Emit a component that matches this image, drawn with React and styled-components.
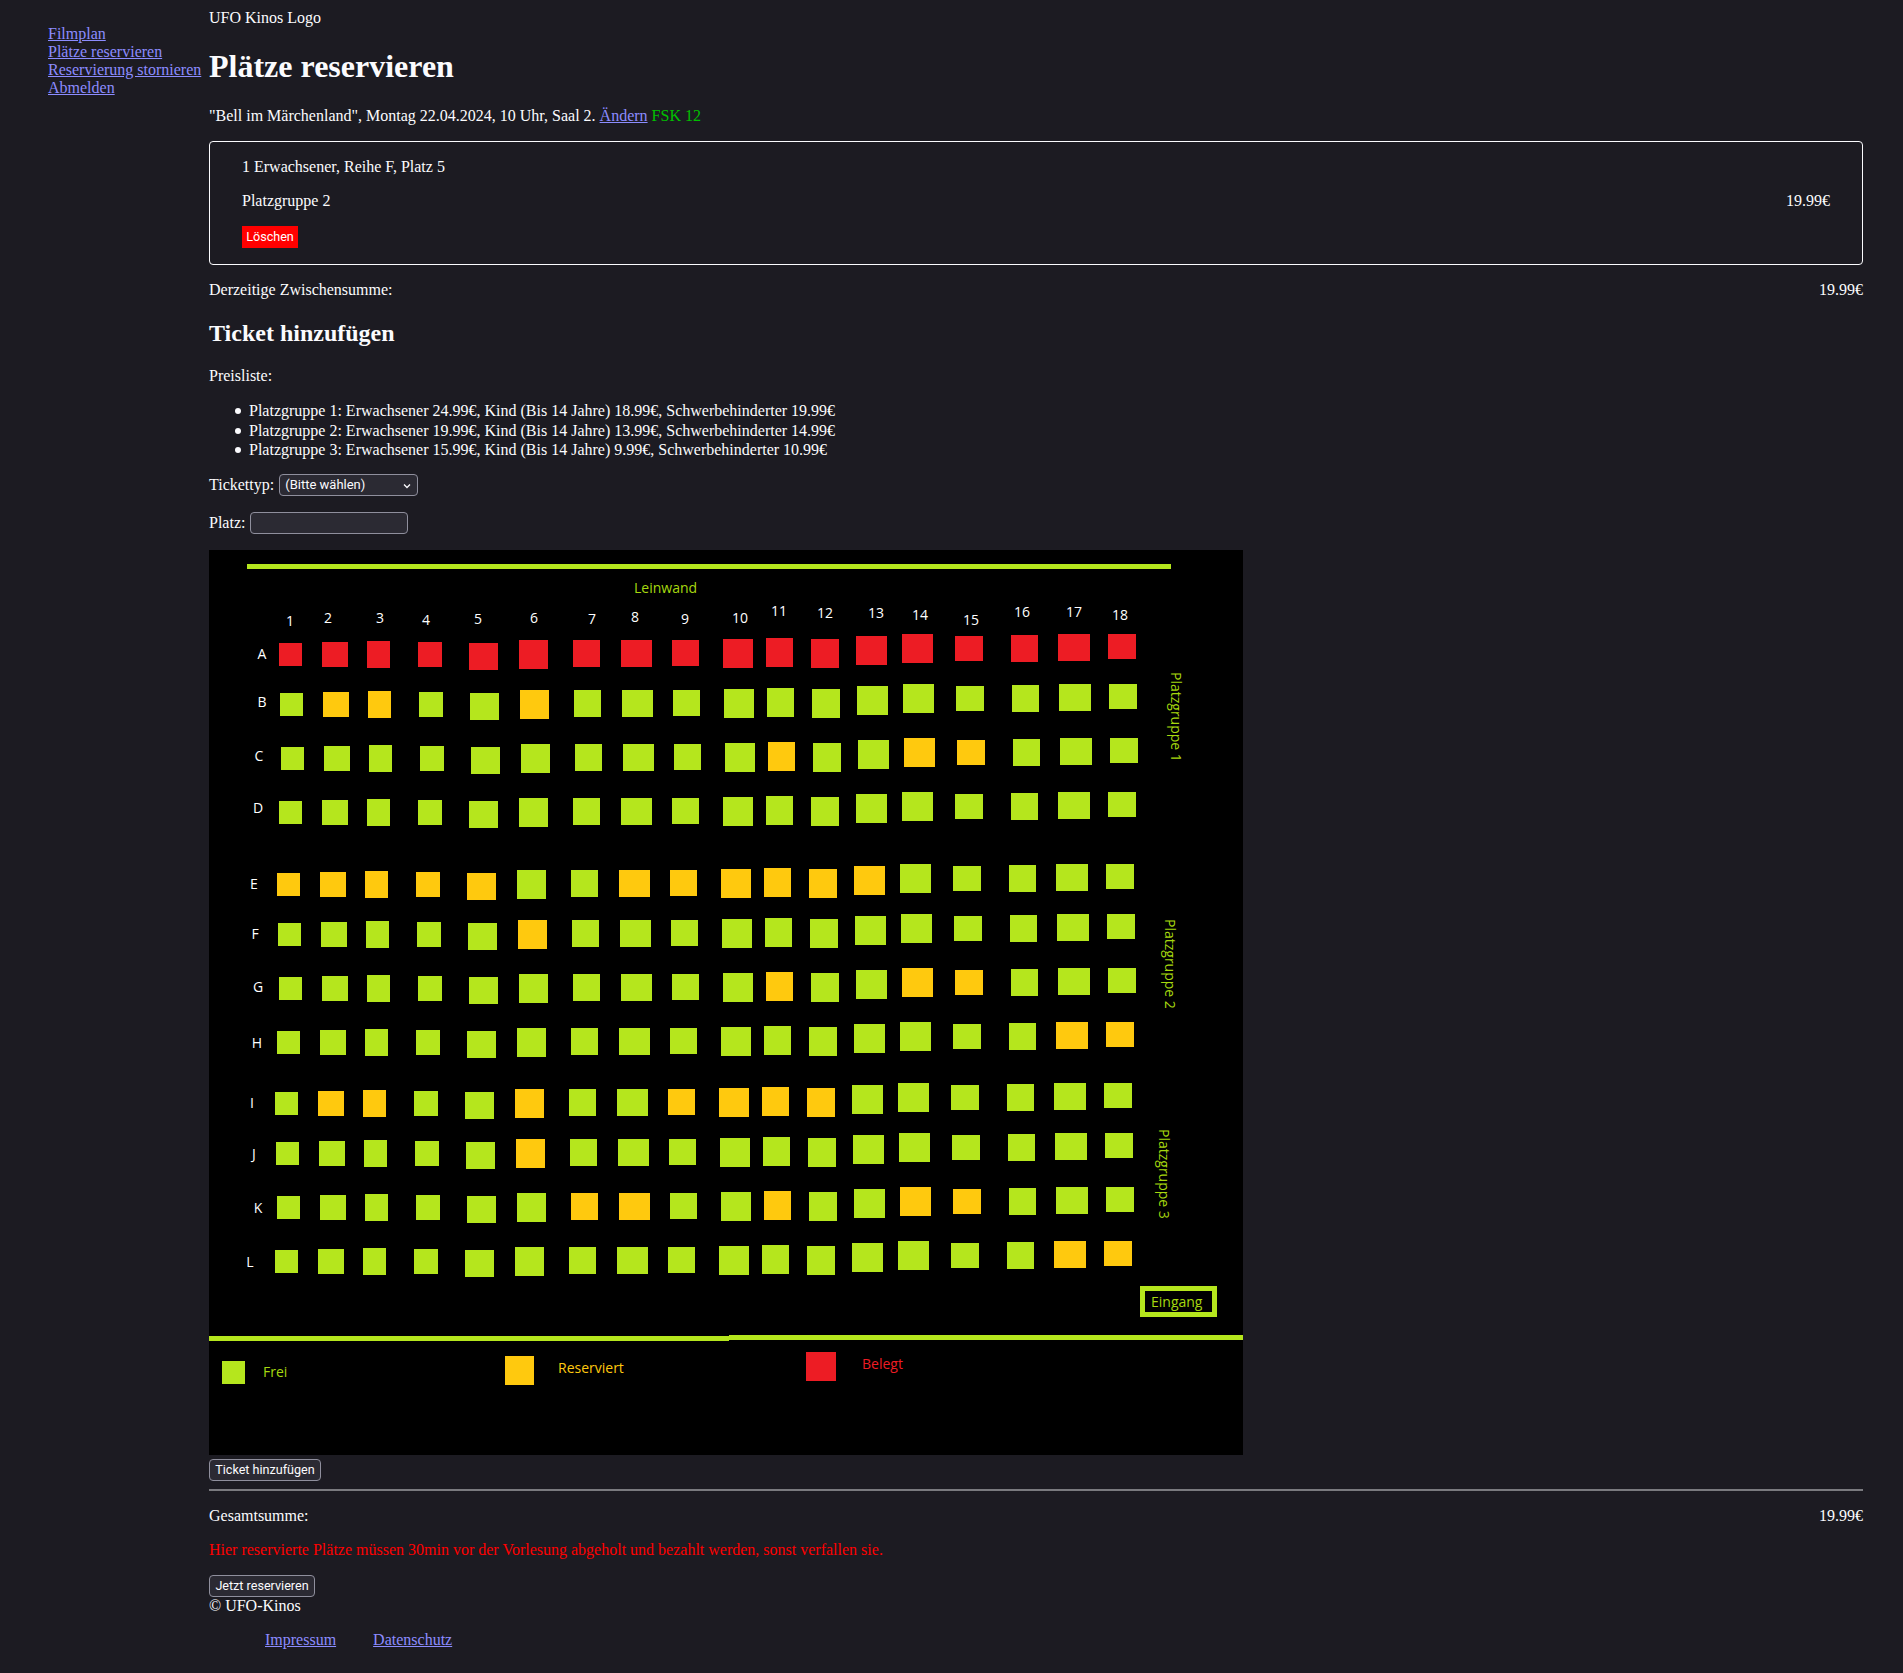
import styled, { createGlobalStyle } from "styled-components";

const GlobalStyle = createGlobalStyle`
  html {
    color-scheme: dark;
  }
  body {
    margin: 8px;
    background: #1c1b22;
    color: #fbfbfe;
    font-family: "Liberation Serif", "Times New Roman", serif;
    font-size: 16px;
    line-height: 18px;
  }
  a {
    color: #8c8cff;
  }
`;

const Layout = styled.div`
  display: flex;
  margin-right: 32px;
`;

const SideNav = styled.nav`
  flex: 0 0 201px;
`;

const NavList = styled.ul`
  list-style: none;
  margin: 17px 0 0;
  padding: 0 0 0 40px;
  white-space: nowrap;
`;

const Main = styled.main`
  flex: 1;
  min-width: 0;
  padding-top: 1px;
`;

const Title = styled.h1`
  font-size: 32px;
  line-height: 37px;
  margin: 21.44px 0;
`;

const SubTitle = styled.h2`
  font-size: 24px;
  line-height: 27.6px;
  margin: 20.92px 0 19.92px;
`;

const Text = styled.p`
  margin: 16px 0;
  color: ${(props) => props.color || "inherit"};
`;

const Rating = styled.span`
  color: #00c000;
`;

const TicketCard = styled.div`
  display: flex;
  flex-direction: column;
  gap: 16px;
  align-items: flex-start;
  border: 1px solid #fbfbfe;
  border-radius: 4px;
  padding: 16px 32px;
`;

const PriceRow = styled.div`
  display: flex;
  justify-content: space-between;
  align-self: stretch;
  margin: ${(props) => props.margin || "0"};
`;

const DeleteButton = styled.button`
  height: 22px;
  width: 56px;
  padding: 0;
  border: none;
  background: #ff0000;
  color: #ffffff;
  font-family: Roboto, sans-serif;
  font-size: 12.6px;
`;

const PriceList = styled.ul`
  list-style: none;
  margin: 16px 0 -1.52px;
  padding-left: 40px;
  line-height: 19.4px;
`;

const PriceItem = styled.li`
  position: relative;

  &::before {
    content: "";
    position: absolute;
    left: -14px;
    top: 7px;
    width: 6px;
    height: 6px;
    border-radius: 50%;
    background: #fbfbfe;
  }
`;

const FormRow = styled.div`
  display: flex;
  align-items: center;
  gap: 5px;
  height: 22px;
  margin: 16px 0;
`;

const SelectBox = styled.div`
  position: relative;
  width: 139px;
  height: 22px;
`;

const Select = styled.select`
  appearance: none;
  width: 100%;
  height: 100%;
  padding: 0 5px;
  background: #2b2a33;
  border: 1px solid #8f8f9d;
  border-radius: 4px;
  color: #fbfbfe;
  font-family: Roboto, sans-serif;
  font-size: 13px;
`;

const Chevron = styled.svg`
  position: absolute;
  right: 7px;
  top: 9px;
  width: 8px;
  height: 6px;
  pointer-events: none;
`;

const Input = styled.input`
  box-sizing: border-box;
  width: 158px;
  height: 22px;
  padding: 0 4px;
  background: #2b2a33;
  border: 1px solid #8f8f9d;
  border-radius: 4px;
`;

const PlanSvg = styled.svg`
  display: block;
  font-family: "Open Sans", sans-serif;
  font-size: 14px;
  shape-rendering: crispEdges;
`;

const ActionButton = styled.button`
  display: block;
  height: 22px;
  width: ${(props) => props.width}px;
  padding: 0;
  background: #2b2a33;
  border: 1px solid #8f8f9d;
  border-radius: 4px;
  color: #fbfbfe;
  font-family: Roboto, sans-serif;
  font-size: 12.6px;
  margin-top: ${(props) => props.top || 0}px;
`;

const Rule = styled.hr`
  margin: 8px 0 16px;
  height: 2px;
  border: none;
  background: #7a7a7f;
`;

const FooterLinks = styled.ul`
  display: flex;
  gap: 37px;
  list-style: none;
  margin: 16px 0 16px 16px;
  padding-left: 40px;
`;

const GREEN = "#b5e61d";
const ORANGE = "#ffc90e";
const RED = "#ed1c24";

// x, y, width, height of each seat in row A; other rows are this row shifted
const COLUMNS = [
  [279, 643, 23, 23], [322, 642, 26, 25], [367, 641, 23, 27],
  [418, 642, 24, 25], [469, 643, 29, 27], [519, 640, 29, 29],
  [573, 640, 27, 27], [621, 640, 31, 27], [672, 640, 27, 26],
  [723, 639, 30, 29], [766, 638, 27, 29], [811, 639, 28, 29],
  [856, 636, 31, 29], [902, 634, 31, 29], [955, 636, 28, 25],
  [1011, 635, 27, 27], [1058, 634, 32, 27], [1108, 634, 28, 25],
];

const COLUMN_LABELS = [
  [290, 626], [328, 623], [380, 623], [426, 625], [478, 624], [534, 623],
  [592, 624], [635, 622], [685, 624], [740, 623], [779, 616], [825, 618],
  [876, 618], [920, 620], [971, 625], [1022, 617], [1074, 617], [1120, 620],
];

const ROWS = [
  { name: "A", dx: 0, dy: 0, labelX: 262, labelY: 659, taken: true, reserved: [] },
  { name: "B", dx: 1, dy: 50, labelX: 262, labelY: 707, reserved: [2, 3, 6] },
  { name: "C", dx: 2, dy: 104, labelX: 259, labelY: 761, reserved: [11, 14, 15] },
  { name: "D", dx: 0, dy: 158, labelX: 258, labelY: 813, reserved: [] },
  { name: "E", dx: -2, dy: 230, labelX: 254, labelY: 889, reserved: [1, 2, 3, 4, 5, 8, 9, 10, 11, 12, 13] },
  { name: "F", dx: -1, dy: 280, labelX: 255, labelY: 939, reserved: [6] },
  { name: "G", dx: 0, dy: 334, labelX: 258, labelY: 992, reserved: [11, 14, 15] },
  { name: "H", dx: -2, dy: 388, labelX: 257, labelY: 1048, reserved: [17, 18] },
  { name: "I", dx: -4, dy: 449, labelX: 252, labelY: 1108, reserved: [2, 3, 6, 9, 10, 11, 12] },
  { name: "J", dx: -3, dy: 499, labelX: 254, labelY: 1159, reserved: [6] },
  { name: "K", dx: -2, dy: 553, labelX: 258, labelY: 1213, reserved: [7, 8, 11, 14, 15] },
  { name: "L", dx: -4, dy: 607, labelX: 250, labelY: 1267, reserved: [17, 18] },
];

const GROUPS = [
  { name: "Platzgruppe 1", x: 1171, y: 672 },
  { name: "Platzgruppe 2", x: 1165, y: 919 },
  { name: "Platzgruppe 3", x: 1159, y: 1129 },
];

function seatColor(row, number) {
  if (row.taken) return RED;
  return row.reserved.includes(number) ? ORANGE : GREEN;
}

function SeatPlan() {
  return (
    <PlanSvg width="1034" height="905" viewBox="209 550 1034 905">
      <rect x="209" y="550" width="1034" height="905" fill="#000000" />
      <rect x="247" y="564" width="924" height="5" fill={GREEN} />
      <text x="634" y="593" fill="#a6d80f">Leinwand</text>

      {COLUMN_LABELS.map(([x, y], i) => (
        <text key={i} x={x} y={y} fill="#ffffff" textAnchor="middle">
          {i + 1}
        </text>
      ))}

      {ROWS.map((row) => (
        <g key={row.name}>
          <text x={row.labelX} y={row.labelY} fill="#ffffff" textAnchor="middle">
            {row.name}
          </text>
          {COLUMNS.map(([x, y, w, h], i) => (
            <rect
              key={i}
              x={x + row.dx}
              y={y + row.dy}
              width={w}
              height={h}
              fill={seatColor(row, i + 1)}
            />
          ))}
        </g>
      ))}

      {GROUPS.map((group) => (
        <text
          key={group.name}
          transform={`translate(${group.x} ${group.y}) rotate(90)`}
          fill="#a6d80f"
        >
          {group.name}
        </text>
      ))}

      <rect x="1142.5" y="1288.5" width="72" height="26" fill="none" stroke={GREEN} strokeWidth="5" />
      <text x="1151" y="1307" fill="#a6d80f">Eingang</text>

      <rect x="209" y="1336" width="520" height="5" fill={GREEN} />
      <rect x="729" y="1335" width="514" height="5" fill={GREEN} />

      <rect x="222" y="1361" width="23" height="23" fill={GREEN} />
      <text x="263" y="1377" fill="#a6d80f">Frei</text>
      <rect x="505" y="1356" width="29" height="29" fill={ORANGE} />
      <text x="558" y="1373" fill={ORANGE}>Reserviert</text>
      <rect x="806" y="1352" width="30" height="29" fill={RED} />
      <text x="862" y="1369" fill={RED}>Belegt</text>
    </PlanSvg>
  );
}

function App() {
  return (
    <>
      <GlobalStyle />
      <Layout>
        <SideNav>
          <NavList>
            <li><a href="#filmplan">Filmplan</a></li>
            <li><a href="#plaetze">Plätze reservieren</a></li>
            <li><a href="#stornieren">Reservierung stornieren</a></li>
            <li><a href="#abmelden">Abmelden</a></li>
          </NavList>
        </SideNav>
        <Main>
          <div>UFO Kinos Logo</div>
          <Title>Plätze reservieren</Title>
          <Text>
            "Bell im Märchenland", Montag 22.04.2024, 10 Uhr, Saal 2.{" "}
            <a href="#aendern">Ändern</a> <Rating>FSK 12</Rating>
          </Text>

          <TicketCard>
            <div>1 Erwachsener, Reihe F, Platz 5</div>
            <PriceRow>
              <span>Platzgruppe 2</span>
              <span>19.99€</span>
            </PriceRow>
            <DeleteButton>Löschen</DeleteButton>
          </TicketCard>

          <PriceRow margin="16px 0">
            <span>Derzeitige Zwischensumme:</span>
            <span>19.99€</span>
          </PriceRow>

          <SubTitle>Ticket hinzufügen</SubTitle>
          <Text>Preisliste:</Text>
          <PriceList>
            <PriceItem>Platzgruppe 1: Erwachsener 24.99€, Kind (Bis 14 Jahre) 18.99€, Schwerbehinderter 19.99€</PriceItem>
            <PriceItem>Platzgruppe 2: Erwachsener 19.99€, Kind (Bis 14 Jahre) 13.99€, Schwerbehinderter 14.99€</PriceItem>
            <PriceItem>Platzgruppe 3: Erwachsener 15.99€, Kind (Bis 14 Jahre) 9.99€, Schwerbehinderter 10.99€</PriceItem>
          </PriceList>

          <FormRow>
            <label htmlFor="tickettyp">Tickettyp:</label>
            <SelectBox>
              <Select id="tickettyp">
                <option>(Bitte wählen)</option>
              </Select>
              <Chevron viewBox="0 0 8 6">
                <path d="M1 1.5 L4 4.5 L7 1.5" fill="none" stroke="#fbfbfe" strokeWidth="1.3" />
              </Chevron>
            </SelectBox>
          </FormRow>
          <FormRow>
            <label htmlFor="platz">Platz:</label>
            <Input id="platz" />
          </FormRow>

          <SeatPlan />

          <ActionButton width={112} top={4}>Ticket hinzufügen</ActionButton>
          <Rule />
          <PriceRow>
            <span>Gesamtsumme:</span>
            <span>19.99€</span>
          </PriceRow>
          <Text color="#ff0000">
            Hier reservierte Plätze müssen 30min vor der Vorlesung abgeholt und bezahlt werden, sonst verfallen sie.
          </Text>
          <ActionButton width={106}>Jetzt reservieren</ActionButton>
          <div>© UFO-Kinos</div>
          <FooterLinks>
            <li><a href="#impressum">Impressum</a></li>
            <li><a href="#datenschutz">Datenschutz</a></li>
          </FooterLinks>
        </Main>
      </Layout>
    </>
  );
}

export default App;
